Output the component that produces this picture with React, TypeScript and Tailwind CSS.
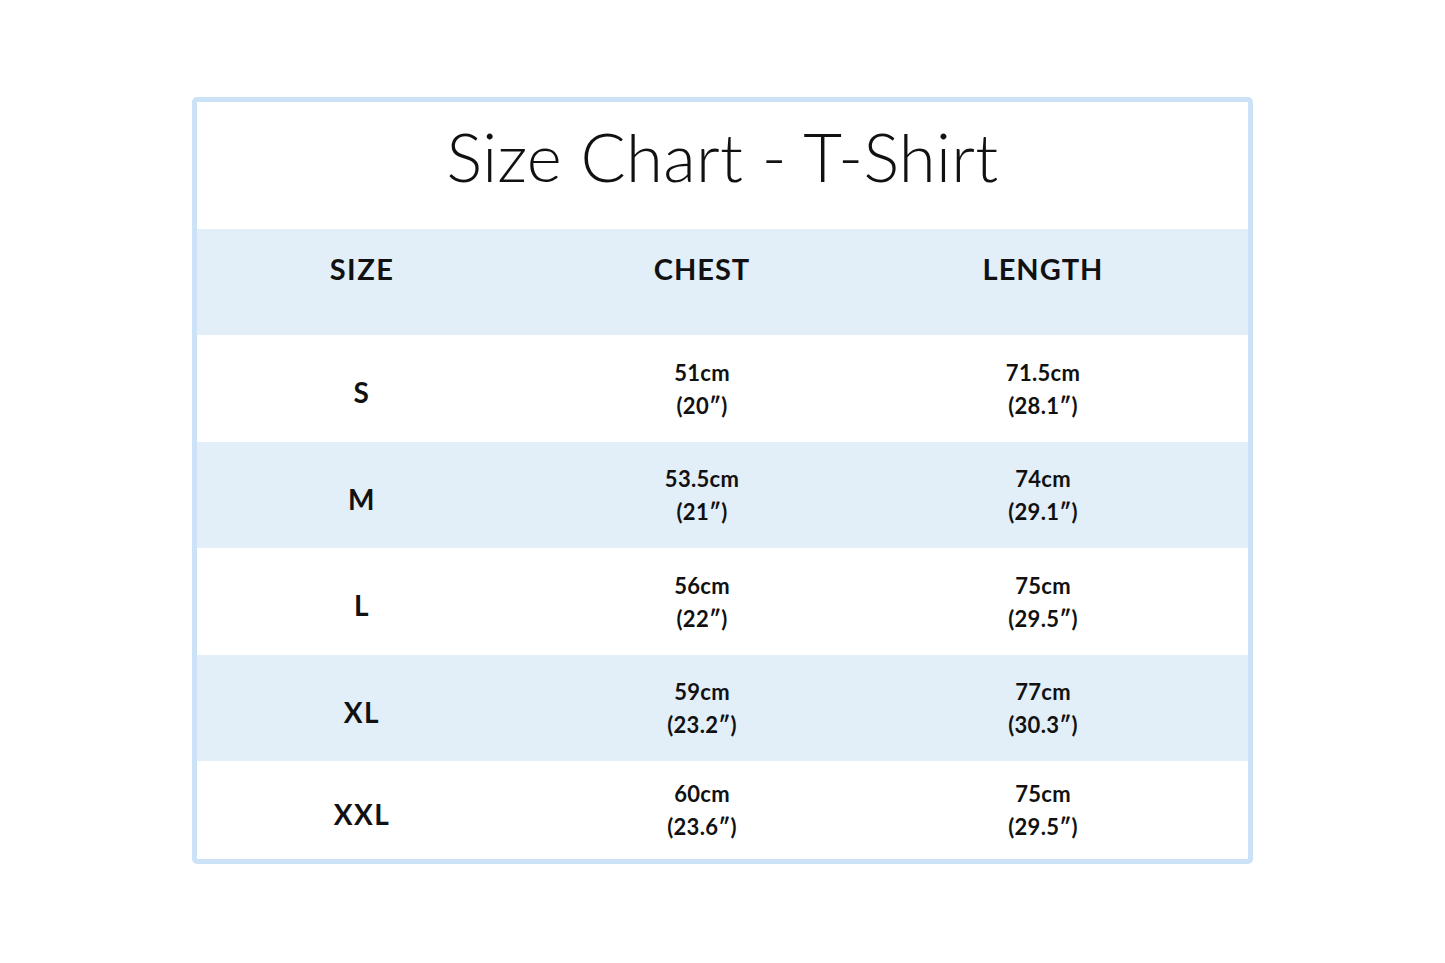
const rows = [
  { size: 'S', chest: ['51cm', '(20″)'], length: ['71.5cm', '(28.1″)'], h: 'h-[107px]' },
  { size: 'M', chest: ['53.5cm', '(21″)'], length: ['74cm', '(29.1″)'], h: 'h-[106px]' },
  { size: 'L', chest: ['56cm', '(22″)'], length: ['75cm', '(29.5″)'], h: 'h-[107px]' },
  { size: 'XL', chest: ['59cm', '(23.2″)'], length: ['77cm', '(30.3″)'], h: 'h-[106px]' },
  { size: 'XXL', chest: ['60cm', '(23.6″)'], length: ['75cm', '(29.5″)'], h: 'h-[98px]' },
]

function Cell({ lines }: { lines: string[] }) {
  return (
    <div className="flex flex-col items-center justify-center text-[22px] font-bold tracking-[0.3px] leading-[33px] text-[#111]">
      {lines.map((l) => (
        <span key={l}>{l}</span>
      ))}
    </div>
  )
}

export default function App() {
  return (
    <div className="w-[1445px] h-[963px] bg-white pt-[97px] pl-[192px] font-['Lato','Open_Sans',sans-serif]">
      <div className="w-[1061px] border-[5px] border-[#cbe2f7] rounded-[5px] bg-white">
        {/* 标题 */}
        <div className="h-[127px] flex items-center justify-center pb-[18px]">
          <h1 className="text-[67px] font-light tracking-[0.3px] text-[#111] leading-none">
            Size Chart - T-Shirt
          </h1>
        </div>

        {/* 表头 */}
        <div className="h-[106px] bg-[#e2eef8] grid grid-cols-[330px_350px_332px_1fr] pb-[26px]">
          <div className="flex items-center justify-center text-[29px] font-bold tracking-[1.5px] text-[#111]">SIZE</div>
          <div className="flex items-center justify-center text-[29px] font-bold tracking-[1px] text-[#111]">CHEST</div>
          <div className="flex items-center justify-center text-[29px] font-bold tracking-[1px] text-[#111]">LENGTH</div>
          <div />
        </div>

        {rows.map((r, i) => (
          <div
            key={r.size}
            className={`${r.h} grid grid-cols-[330px_350px_332px_1fr] ${i % 2 === 1 ? 'bg-[#e2eef8]' : 'bg-white'}`}
          >
            <div className="flex items-center justify-center pt-[7px] text-[28px] font-bold tracking-[1.5px] text-[#111]">{r.size}</div>
            <Cell lines={r.chest} />
            <Cell lines={r.length} />
            <div />
          </div>
        ))}
      </div>
    </div>
  )
}
